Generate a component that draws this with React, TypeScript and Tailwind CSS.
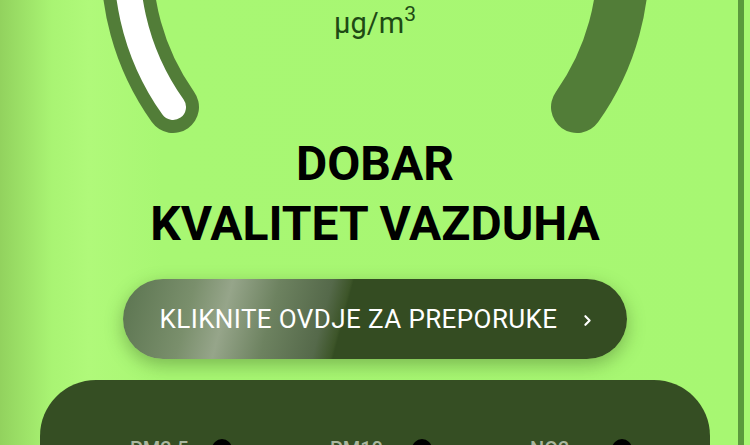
import { ChevronRight } from 'lucide-react';

const readings = [
  { label: 'PM2.5', dot: 'bg-black' },
  { label: 'PM10', dot: 'bg-black' },
  { label: 'NO2', dot: 'bg-black' },
];

function Gauge() {
  return (
    <svg width="726" height="140" viewBox="12 0 726 140" className="absolute inset-0">
      <path
        d="M 173 107 A 248 248 0 1 1 577 107"
        fill="none"
        stroke="#527d38"
        strokeWidth="52"
        strokeLinecap="round"
      />
      <path
        d="M 173 107 A 248 248 0 0 1 250 -251"
        fill="none"
        stroke="#ffffff"
        strokeWidth="26"
        strokeLinecap="round"
      />
    </svg>
  );
}

export default function App() {
  return (
    <div
      className="w-[750px] h-[445px] overflow-hidden flex bg-[#a7f772]"
      style={{ fontFamily: 'Roboto, "Noto Sans", sans-serif' }}
    >
      <div className="w-[738px] h-full shrink-0 pl-[12px] flex flex-col items-center bg-[linear-gradient(90deg,#92d25e_0%,#a9f473_7%,#b0f97a_12%,#a8f773_22%,#a7f772_100%)]">
        <div className="relative w-[726px] h-[140px] shrink-0">
          <Gauge />
          <div className="relative flex justify-center pt-[4px] text-[29px] leading-[38px] text-[#1e4a14]">
            <span>
              μg/m<sup className="text-[21px] relative -top-[12px]">3</sup>
            </span>
          </div>
        </div>

        <h1 className="shrink-0 text-center font-bold text-[48px] leading-[60px] text-black -mt-[6px]">
          DOBAR
          <br />
          KVALITET VAZDUHA
        </h1>

        <button className="shrink-0 mt-[25px] w-[504px] h-[80px] rounded-full flex items-center justify-center gap-[22px] pl-[6px] text-white text-[26px] tracking-[0.4px] shadow-[0_6px_18px_rgba(40,70,20,0.35)] bg-[linear-gradient(105deg,#5b7450_0%,#7a8f6c_14%,#96a58a_21%,#6d8260_30%,#55694a_40%,#3d5529_43.5%,#344c22_44%,#344c22_100%)]">
          <span>KLIKNITE OVDJE ZA PREPORUKE</span>
          <ChevronRight className="w-[17px] h-[17px] mt-[2px]" strokeWidth={3} />
        </button>

        <div className="shrink-0 mt-[21px] w-[670px] h-[120px] overflow-hidden rounded-t-[56px] bg-[#354e23] flex pt-[59px] pl-[90px]">
          {readings.map((r) => (
            <div key={r.label} className="w-[200px] shrink-0 flex items-start">
              <span className="w-[82px] text-[#a9b79e] text-[20px] leading-[20px] font-medium">{r.label}</span>
              <span className={`w-[20px] h-[20px] rounded-full ${r.dot}`} />
            </div>
          ))}
        </div>
      </div>
      <div className="w-[6px] h-full shrink-0 bg-[#5b9a3d]" />
      <div className="w-[6px] h-full shrink-0 bg-[#a7f772]" />
    </div>
  );
}
